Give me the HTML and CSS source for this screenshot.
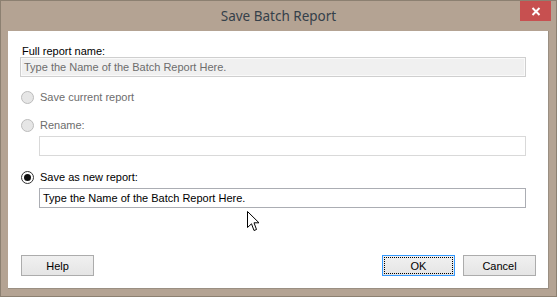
FILE: index.html
```html
<!DOCTYPE html>
<html lang="en">
<head>
  <meta charset="UTF-8" />
  <title>Save Batch Report</title>
  <link rel="stylesheet" href="styles.css">
</head>
<body>

  <div class="window">
    <div class="titlebar">
      <span class="title">Save Batch Report</span>
      <div class="close-btn">
        <svg width="10" height="9" viewBox="0 0 10 9">
          <path d="M1.5 1 L8.5 8 M8.5 1 L1.5 8" stroke="#fff" stroke-width="2"/>
        </svg>
      </div>
    </div>

    <div class="client">
      <div class="field">
        <label class="caption">Full report name:</label>
        <div class="textbox readonly">Type the Name of the Batch Report Here.</div>
      </div>

      <div class="option disabled">
        <span class="radio"></span>
        <span>Save current report</span>
      </div>

      <div class="option disabled">
        <span class="radio"></span>
        <span>Rename:</span>
      </div>
      <div class="textbox sub disabled-box"></div>

      <div class="option">
        <span class="radio checked"></span>
        <span>Save as new report:</span>
      </div>
      <div class="textbox sub active">Type the Name of the Batch Report Here.</div>

      <div class="buttons">
        <div class="btn">Help</div>
        <div class="right">
          <div class="btn focused"><span>OK</span></div>
          <div class="btn">Cancel</div>
        </div>
      </div>
    </div>

    <!-- mouse pointer over the dialog -->
    <svg class="pointer" width="13" height="21" viewBox="0 0 13 21">
      <path d="M0.5 0.5 L0.5 16.5 L4.5 12.8 L7 19.5 L9.5 18.5 L7 11.8 L12 11.8 Z" fill="#fff" stroke="#000" stroke-width="1"/>
    </svg>
  </div>

</body>
</html>
```

FILE: styles.css
```css
* {
  margin: 0; padding: 0; box-sizing: border-box;
}
body {
  width: 557px;
  height: 297px;
  overflow: hidden;
  font-family: "Liberation Sans", Arial, sans-serif;
  font-size: 11px;
  color: #000;
}
.window {
  position: relative;
  width: 557px;
  height: 297px;
  background: #b4a393;
  border: 1px solid #8c8071;
  display: flex;
  flex-direction: column;
}
.titlebar {
  height: 30px;
  display: flex;
  align-items: center;
  justify-content: center;
  position: relative;
}
.title {
  font-family: "Noto Sans", sans-serif;
  font-size: 13.5px;
  color: #35404a;
  margin-top: -1px;
}
.close-btn {
  position: absolute;
  top: 0;
  right: 5px;
  width: 31px;
  height: 20px;
  background: #c75050;
  display: flex;
  align-items: center;
  justify-content: center;
}
.client {
  margin: 0 7px 7px 7px;
  flex: 1;
  background: #fff;
  border-right: 1px solid #9a8f82;
  border-bottom: 1px solid #9a8f82;
  padding: 14px 23px 0 12px;
  display: flex;
  flex-direction: column;
}
.caption {
  display: block;
  padding-left: 2px;
  line-height: 12px;
}
.textbox {
  height: 20px;
  border: 1px solid #abadb3;
  padding: 0 3px;
  line-height: 18px;
  white-space: nowrap;
  overflow: hidden;
}
.textbox.readonly {
  width: 506px;
  background: #f0f0f0;
  border-color: #cfcfcf;
  box-shadow: inset 0 0 0 1px #fafafa;
  color: #6d6d6d;
}
.textbox.sub {
  margin-left: 19px;
  width: 487px;
}
.disabled-box {
  border-color: #d9d9d9;
}
.option {
  display: flex;
  align-items: center;
  gap: 6px;
  height: 14px;
  margin-top: 13px;
  margin-left: 1px;
}
.option.disabled {
  color: #6d6d6d;
}
.option + .option {
  margin-top: 14px;
}
.option + .textbox {
  margin-top: 4px;
}
.textbox + .option {
  margin-top: 14px;
}
.radio {
  width: 13px;
  height: 13px;
  border-radius: 50%;
  border: 1px solid #bcbcbc;
  background: #e6e6e6;
  flex-shrink: 0;
  display: flex;
  align-items: center;
  justify-content: center;
}
.radio.checked {
  border-color: #333;
  background: #fff;
}
.radio.checked::after {
  content: "";
  width: 7px;
  height: 7px;
  border-radius: 50%;
  background: #111;
}
.buttons {
  margin-top: auto;
  margin-bottom: 12px;
  margin-left: 1px;
  margin-right: -11px;
  display: flex;
  justify-content: space-between;
}
.right {
  display: flex;
  gap: 8px;
}
.btn {
  width: 73px;
  height: 21px;
  border: 1px solid #acacac;
  background: linear-gradient(#f0f0f0, #e5e5e5);
  display: flex;
  align-items: center;
  justify-content: center;
}
.btn.focused {
  border-color: #3399ff;
  padding: 1px;
}
.btn.focused span {
  width: 100%;
  height: 100%;
  border: 1px dotted #000;
  display: flex;
  align-items: center;
  justify-content: center;
}
.pointer {
  position: absolute;
  left: 246px;
  top: 210px;
}
```
